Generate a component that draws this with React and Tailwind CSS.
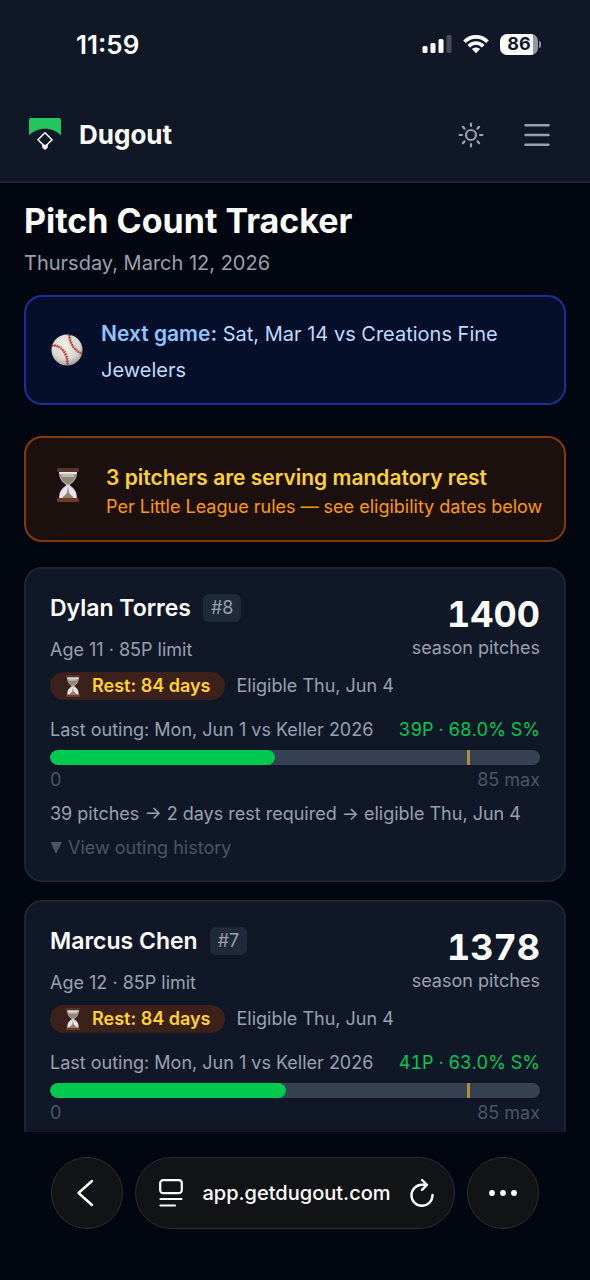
import React, { useState } from 'react';

const pitchers = [
  {
    id: 8,
    name: 'Dylan Torres',
    age: 11,
    limit: 85,
    seasonPitches: '1400',
    restDays: 84,
    eligible: 'Thu, Jun 4',
    lastOuting: 'Mon, Jun 1 vs Keller 2026',
    pitches: 39,
    strikePct: '68.0%',
    restNote: '39 pitches → 2 days rest required → eligible Thu, Jun 4',
  },
  {
    id: 7,
    name: 'Marcus Chen',
    age: 12,
    limit: 85,
    seasonPitches: '1378',
    restDays: 84,
    eligible: 'Thu, Jun 4',
    lastOuting: 'Mon, Jun 1 vs Keller 2026',
    pitches: 41,
    strikePct: '63.0%',
  },
];

const Hourglass = ({ className }) => (
  <svg viewBox="0 0 24 34" className={className} aria-hidden="true">
    <path d="M3 3h18c0 7-2 10-7 13.500v1C19 21 21 24 21 31H3c0-7 2-10 7-13.500v-1C5 13 3 10 3 3z" fill="#cfcccd" />
    <path d="M4 6h16c-.5 5-3 8-7.500 10.500h-1C7 14 4.500 11 4 6z" fill="#8f857b" />
    <path d="M5 6h14l-1 3H6z" fill="#c2bab0" />
    <path d="M11.500 18h1C18 21 20 24 20 30H4c0-6 2-9 7.500-12z" fill="#e6e4f3" />
    <path d="M12 18l1 7 5 5H6l5-5z" fill="#9a8060" />
    <rect x="1" y="0" width="22" height="4" rx="1.500" fill="#54352a" />
    <rect x="3" y="4" width="18" height="1.500" fill="#efe9e4" />
    <rect x="1" y="30" width="22" height="4" rx="1.500" fill="#6d3d2a" />
  </svg>
);

const Baseball = () => (
  <svg viewBox="0 0 32 32" className="size-8 shrink-0" aria-hidden="true">
    <defs>
      <radialGradient id="ball" cx="0.45" cy="0.35" r="0.65">
        <stop offset="0" stopColor="#f3f0ec" />
        <stop offset="0.7" stopColor="#d9d5cf" />
        <stop offset="1" stopColor="#a5a19d" />
      </radialGradient>
    </defs>
    <circle cx="16" cy="16" r="15.500" fill="url(#ball)" />
    <g fill="none" stroke="#b23a34">
      <path d="M1 11.500c8-1 16 7 15.500 19" strokeWidth="1" />
      <path d="M1 11.500c8-1 16 7 15.500 19" strokeWidth="3.200" strokeDasharray="1.100 1.300" opacity="0.85" />
      <path d="M18.500 1c0 8 5 16 12.500 18.500" strokeWidth="1" />
      <path d="M18.500 1c0 8 5 16 12.500 18.500" strokeWidth="3.200" strokeDasharray="1.100 1.300" opacity="0.85" />
    </g>
  </svg>
);

const StatusBar = () => (
  <div className="flex h-[88px] items-center justify-between pl-[76px] pr-[49px]">
    <span className="text-[26px] font-semibold">11:59</span>
    <div className="flex items-center gap-[11px]">
      <svg viewBox="0 0 30 20" className="h-5 w-[30px]" aria-hidden="true">
        <rect x="0.500" y="12" width="5" height="7" rx="1.500" fill="#fff" />
        <rect x="8.500" y="9" width="5" height="10" rx="1.500" fill="#fff" />
        <rect x="16.500" y="5" width="5" height="14" rx="1.500" fill="#fff" />
        <rect x="24.500" y="1" width="5" height="18" rx="1.500" fill="#454b5a" />
      </svg>
      <svg viewBox="0 0 26 20" className="h-5 w-[26px]" aria-hidden="true">
        <g fill="none" stroke="#fff" strokeWidth="3.600">
          <path d="M1.500 7.800C8 1.200 18 1.200 24.500 7.800" />
          <path d="M5.800 12.200c4-4.200 10.400-4.200 14.400 0" />
        </g>
        <path d="M13 19.300l-4-4.200c2.200-2 5.800-2 8 0z" fill="#fff" />
      </svg>
      <div className="flex items-center gap-px">
        <div className="flex h-[21px] w-[38px] items-center justify-center rounded-[7px] bg-linear-to-r from-white from-86% to-[#9297a0] to-86% text-lg font-bold text-[#101828]">
          86
        </div>
        <div className="h-[7px] w-[2px] rounded-r-full bg-[#8a8f99]" />
      </div>
    </div>
  </div>
);

const Header = () => (
  <header className="shrink-0 border-b-2 border-[#1b2534] bg-[#101828]">
    <StatusBar />
    <div className="flex h-[93px] items-center justify-between pl-[29px] pr-10">
      <a href="#home" className="flex items-center gap-[18px]">
        <svg viewBox="0 0 32 36" className="h-9 w-8" aria-hidden="true">
          <path d="M0 18.500V3a2 2 0 0 1 2-2h28a2 2 0 0 1 2 2v15.500C24 9.500 8 9.500 0 18.500z" fill="#22c55e" />
          <path d="M16 15.700l7 7-7 7-7-7z" fill="none" stroke="#fff" strokeWidth="1.500" />
          <path d="M13.200 27.800h5.600v2.700L16 33l-2.800-2.500z" fill="#fff" />
        </svg>
        <span className="text-[26px] font-bold">Dugout</span>
      </a>
      <div className="flex items-center gap-10 text-[#99a1af]">
        <button type="button" aria-label="Toggle theme">
          <svg viewBox="0 0 26 26" className="size-[26px]" fill="none" stroke="currentColor" strokeWidth="2.200" strokeLinecap="round">
            <circle cx="13" cy="13" r="5" />
            <path d="M13 1.500v2.500M13 22v2.500M1.500 13H4M22 13h2.500M4.900 4.900l1.700 1.700M19.400 19.400l1.700 1.700M4.900 21.100l1.700-1.700M19.400 6.600l1.700-1.700" />
          </svg>
        </button>
        <button type="button" aria-label="Open menu">
          <svg viewBox="0 0 26 26" className="size-[26px]" fill="none" stroke="currentColor" strokeWidth="2.500" strokeLinecap="round">
            <path d="M1.500 3.300h23M1.500 13h23M1.500 22.700h23" />
          </svg>
        </button>
      </div>
    </div>
  </header>
);

const PitchBar = ({ pitches, limit }) => (
  <div className="relative mt-[10px] h-[15px] overflow-hidden rounded-full bg-[#364153]">
    <div className="h-full rounded-full bg-[#00c950]" style={{ width: `${(pitches / limit) * 100}%` }} />
    <div className="absolute inset-y-0 left-[85%] w-[3px] bg-[#b08d3c]" />
  </div>
);

const PitcherCard = ({ pitcher }) => {
  const [open, setOpen] = useState(false);

  return (
    <section className="rounded-[18px] border-2 border-[#1b2534] bg-[#101828] px-6 pt-[25px] pb-[22px] text-lg leading-5 text-[#99a1af]">
      <div className="flex justify-between">
        <div>
          <div className="flex items-center gap-3">
            <h2 className="text-[23px] leading-7 font-semibold text-white">{pitcher.name}</h2>
            <span className="rounded-md bg-[#1e2939] px-2 leading-7">#{pitcher.id}</span>
          </div>
          <p className="mt-[18px]">
            Age {pitcher.age} · {pitcher.limit}P limit
          </p>
        </div>
        <div className="text-right">
          <p className="text-4xl leading-10 font-bold text-white tabular-nums">{pitcher.seasonPitches}</p>
          <p className="mt-1">season pitches</p>
        </div>
      </div>

      <div className="mt-3 flex items-center gap-3">
        <span className="flex items-center gap-2 rounded-full bg-[#3b2119] pl-3 pr-[14px] leading-7 font-semibold text-[#ffd230]">
          <Hourglass className="h-[22px] w-[22px]" />
          Rest: {pitcher.restDays} days
        </span>
        <span>Eligible {pitcher.eligible}</span>
      </div>

      <div className="mt-5 flex justify-between">
        <span>Last outing: {pitcher.lastOuting}</span>
        <span className="text-[#00c950] tabular-nums">
          {pitcher.pitches}P · {pitcher.strikePct} S%
        </span>
      </div>
      <PitchBar pitches={pitcher.pitches} limit={pitcher.limit} />
      <div className="mt-[5px] flex justify-between text-[#4a5565]">
        <span>0</span>
        <span>{pitcher.limit} max</span>
      </div>

      {pitcher.restNote && (
        <>
          <p className="mt-[14px]">{pitcher.restNote}</p>
          <button
            type="button"
            onClick={() => setOpen(!open)}
            aria-expanded={open}
            className="mt-[14px] flex items-center gap-[6px] text-[#4a5565]"
          >
            <svg viewBox="0 0 12 12" className="size-3" aria-hidden="true">
              <path d="M0.500 0h11.500L6 12z" fill="currentColor" />
            </svg>
            View outing history
          </button>
        </>
      )}
    </section>
  );
};

const BrowserBar = () => (
  <nav className="flex h-[148px] shrink-0 items-start gap-3 px-[51px] pt-[25px]">
    <button type="button" aria-label="Back" className="flex size-[72px] items-center justify-center rounded-full border border-[#2c2d32] bg-[#121316]">
      <svg viewBox="0 0 28 28" className="size-7" fill="none" stroke="#fff" strokeWidth="2.400" strokeLinecap="round" strokeLinejoin="round">
        <path d="M19 2L5.500 14 19 26" />
      </svg>
    </button>
    <div className="flex h-[72px] flex-1 items-center justify-between rounded-full border border-[#2c2d32] bg-[#121316] pl-[23px] pr-5">
      <button type="button" aria-label="Page menu">
        <svg viewBox="0 0 24 28" className="h-7 w-6" fill="none" stroke="#fff" strokeWidth="2.200" strokeLinecap="round">
          <rect x="1.200" y="1.200" width="21.600" height="13" rx="3" />
          <path d="M1.500 20h21M1.500 26.500h14.500" />
        </svg>
      </button>
      <span className="text-xl font-medium">app.getdugout.com</span>
      <button type="button" aria-label="Reload">
        <svg viewBox="0 0 24 28" className="h-7 w-6" fill="none" stroke="#fff" strokeWidth="2.400" strokeLinecap="round" strokeLinejoin="round">
          <path d="M22.500 16A10.500 10.500 0 1 1 12 5.800h4.500M12 1l5 4.800-5 5" />
        </svg>
      </button>
    </div>
    <button type="button" aria-label="More" className="flex size-[72px] items-center justify-center rounded-full border border-[#2c2d32] bg-[#121316]">
      <svg viewBox="0 0 28 8" className="h-2 w-7" fill="#fff">
        <circle cx="3" cy="4" r="2.900" />
        <circle cx="14" cy="4" r="2.900" />
        <circle cx="25" cy="4" r="2.900" />
      </svg>
    </button>
  </nav>
);

const App = () => {
  return (
    <div className="flex h-screen flex-col bg-[#020610] font-['Inter',sans-serif] text-white">
      <Header />

      <main className="min-h-0 flex-1 overflow-hidden px-6 pt-4">
        <h1 className="text-[34px] leading-11 font-bold">Pitch Count Tracker</h1>
        <p className="mt-1 text-xl leading-8 text-[#99a1af]">Thursday, March 12, 2026</p>

        {/* Next game */}
        <div className="mt-4 flex items-center gap-[18px] rounded-[18px] border-2 border-[#1c2f98] bg-[#050f29] px-[25px] py-[15px]">
          <Baseball />
          <p className="pt-1 text-xl leading-9 text-[#bedbff]">
            <strong className="text-[21px] font-semibold text-[#8ec5ff]">Next game:</strong> Sat, Mar 14 vs Creations Fine Jewelers
          </p>
        </div>

        {/* Rest alert */}
        <div className="mt-[31px] flex items-start gap-[26px] rounded-[18px] border-2 border-[#83390a] bg-[#1b100e] pt-[26px] pr-5 pb-[22px] pl-[30px]">
          <Hourglass className="mt-1 h-[34px] w-6 shrink-0" />
          <div>
            <p className="text-[21px] leading-7 font-semibold text-[#ffd230]">3 pitchers are serving mandatory rest</p>
            <p className="mt-1 text-lg leading-[22px] text-[#fe9a00]">Per Little League rules — see eligibility dates below</p>
          </div>
        </div>

        <div className="mt-[25px] space-y-[18px]">
          {pitchers.map((p) => (
            <PitcherCard key={p.id} pitcher={p} />
          ))}
        </div>
      </main>

      <BrowserBar />
    </div>
  );
};

export default App;
